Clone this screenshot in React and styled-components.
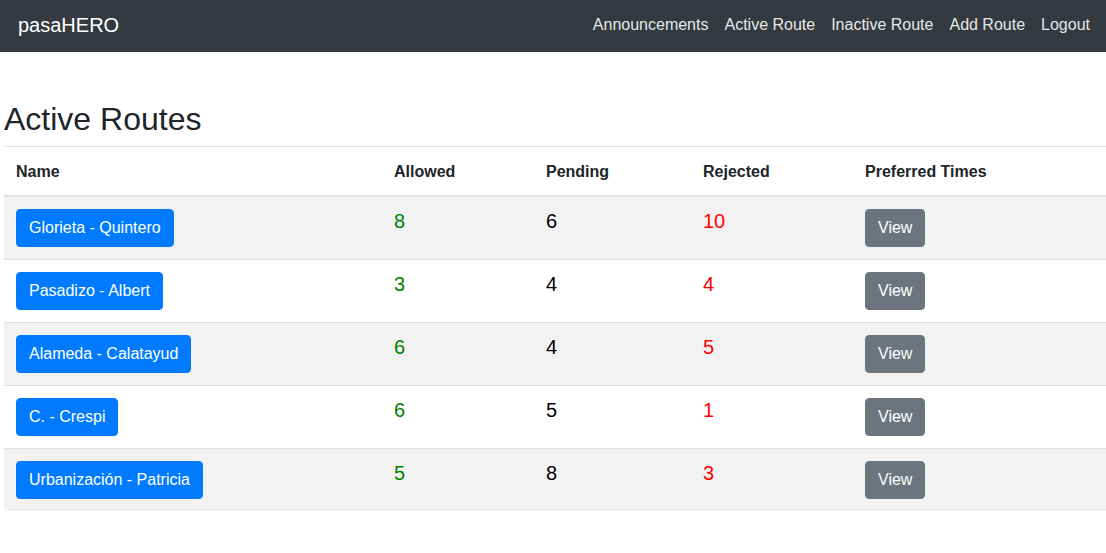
import React from "react";
import styled, { createGlobalStyle } from "styled-components";

const Global = createGlobalStyle`
  * { box-sizing: border-box; }
  body {
    margin: 0;
    font-family: "Liberation Sans", Arial, sans-serif;
    font-size: 16px;
    line-height: 1.5;
    color: #212529;
    background: #fff;
  }
`;

const NavBar = styled.nav`
  height: 52px;
  background: #343a40;
  display: flex;
  align-items: center;
  justify-content: space-between;
  padding: 0 8px 2px 18px;
`;

const Brand = styled.a`
  font-size: 20px;
  line-height: 30px;
  color: #fff;
  text-decoration: none;
`;

const NavList = styled.div`
  display: flex;
  align-items: center;
`;

const NavLink = styled.a`
  color: rgba(255, 255, 255, 0.9);
  text-decoration: none;
  font-size: 16px;
  line-height: 24px;
  padding: 8px;
`;

const Main = styled.main`
  padding: 48px 0 0 4px;
`;

const Title = styled.h2`
  margin: 0 0 8px;
  font-size: 32px;
  font-weight: 400;
  line-height: 1.2;
`;

const Table = styled.table`
  width: 1102px;
  border-collapse: collapse;
`;

const Th = styled.th`
  width: ${(p) => p.$w}px;
  text-align: left;
  font-weight: 700;
  padding: 13px 12px 11px;
  border-top: 1px solid #dee2e6;
  border-bottom: 2px solid #dee2e6;
  vertical-align: bottom;
`;

const Row = styled.tr`
  background: ${(p) => (p.$striped ? "#f2f2f2" : "transparent")};
`;

const Td = styled.td`
  padding: 12px;
  border-top: 1px solid #dee2e6;
  vertical-align: top;
`;

const Count = styled.div`
  font-size: 20px;
  line-height: 1.2;
  color: ${(p) => p.$color};
`;

const Button = styled.button`
  font-family: inherit;
  font-size: 16px;
  line-height: 24px;
  padding: 6px 12px;
  border: 1px solid ${(p) => (p.$variant === "secondary" ? "#6c757d" : "#007bff")};
  background: ${(p) => (p.$variant === "secondary" ? "#6c757d" : "#007bff")};
  color: #fff;
  border-radius: 4px;
  cursor: pointer;
`;

const routes = [
  { name: "Glorieta - Quintero", allowed: 8, pending: 6, rejected: 10 },
  { name: "Pasadizo - Albert", allowed: 3, pending: 4, rejected: 4 },
  { name: "Alameda - Calatayud", allowed: 6, pending: 4, rejected: 5 },
  { name: "C. - Crespi", allowed: 6, pending: 5, rejected: 1 },
  { name: "Urbanización - Patricia", allowed: 5, pending: 8, rejected: 3 },
];

export default function App() {
  return (
    <>
      <Global />
      <NavBar>
        <Brand href="#">pasaHERO</Brand>
        <NavList>
          <NavLink href="#">Announcements</NavLink>
          <NavLink href="#">Active Route</NavLink>
          <NavLink href="#">Inactive Route</NavLink>
          <NavLink href="#">Add Route</NavLink>
          <NavLink href="#">Logout</NavLink>
        </NavList>
      </NavBar>
      <Main>
        <Title>Active Routes</Title>
        <Table>
          <thead>
            <tr>
              <Th $w={378}>Name</Th>
              <Th $w={152}>Allowed</Th>
              <Th $w={157}>Pending</Th>
              <Th $w={162}>Rejected</Th>
              <Th $w={253}>Preferred Times</Th>
            </tr>
          </thead>
          <tbody>
            {routes.map((r, i) => (
              <Row key={r.name} $striped={i % 2 === 0}>
                <Td>
                  <Button>{r.name}</Button>
                </Td>
                <Td>
                  <Count $color="#008000">{r.allowed}</Count>
                </Td>
                <Td>
                  <Count $color="#000">{r.pending}</Count>
                </Td>
                <Td>
                  <Count $color="#ff0000">{r.rejected}</Count>
                </Td>
                <Td>
                  <Button $variant="secondary">View</Button>
                </Td>
              </Row>
            ))}
          </tbody>
        </Table>
      </Main>
    </>
  );
}
